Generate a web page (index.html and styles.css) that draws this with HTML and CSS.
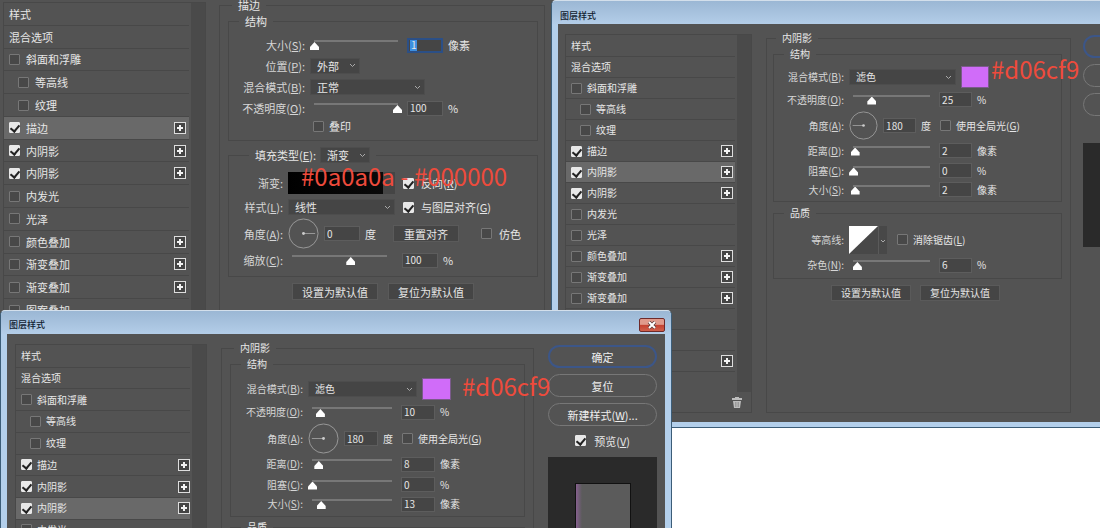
FILE: index.html
```html
<!DOCTYPE html>
<html lang="zh-CN">
<head>
<meta charset="utf-8">
<title>图层样式</title>
<link rel="stylesheet" href="styles.css">
</head>
<body>
<main class="desktop">

<section class="window stroke-window" aria-label="描边">
  <div class="body">
    <div class="effects">
      <div class="effects-main">
        <ul class="list">
          <li>样式</li>
          <li>混合选项</li>
          <li><label><input type="checkbox">斜面和浮雕</label></li>
          <li class="sub"><label><input type="checkbox">等高线</label></li>
          <li class="sub"><label><input type="checkbox">纹理</label></li>
          <li class="selected"><label><input type="checkbox" checked>描边</label><button class="add" aria-label="添加"></button></li>
          <li><label><input type="checkbox" checked>内阴影</label><button class="add" aria-label="添加"></button></li>
          <li><label><input type="checkbox" checked>内阴影</label><button class="add" aria-label="添加"></button></li>
          <li><label><input type="checkbox">内发光</label></li>
          <li><label><input type="checkbox">光泽</label></li>
          <li><label><input type="checkbox">颜色叠加</label><button class="add" aria-label="添加"></button></li>
          <li><label><input type="checkbox">渐变叠加</label><button class="add" aria-label="添加"></button></li>
          <li><label><input type="checkbox">渐变叠加</label><button class="add" aria-label="添加"></button></li>
          <li><label><input type="checkbox">图案叠加</label></li>
        </ul>
        <div class="scroll"></div>
      </div>
    </div>
    <fieldset class="panel">
      <legend>描边</legend>
      <fieldset class="group stroke-shape">
        <legend>结构</legend>
        <div class="row"><label class="name" for="a-size">大小(<u>S</u>):</label><input class="slider" type="range" value="0" aria-label="大小"><input class="num focused" id="a-size" value="1"><span>像素</span></div>
        <div class="row"><label class="name" for="a-pos">位置(<u>P</u>):</label><select class="short" id="a-pos"><option>外部</option></select></div>
        <div class="row"><label class="name" for="a-mode">混合模式(<u>B</u>):</label><select class="wide" id="a-mode"><option>正常</option></select></div>
        <div class="row"><label class="name" for="a-op">不透明度(<u>O</u>):</label><input class="slider" type="range" value="100" aria-label="不透明度"><input class="num" id="a-op" value="100"><span>%</span></div>
        <div class="row"><span class="name"></span><label class="check overprint"><input type="checkbox"><span>叠印</span></label></div>
      </fieldset>
      <fieldset class="group stroke-fill">
        <legend><label for="a-fill">填充类型(<u>E</u>):</label><select class="short" id="a-fill"><option>渐变</option></select></legend>
        <div class="row"><span class="name">渐变:</span><button class="gradient" aria-label="渐变"><span></span></button><label class="check"><input type="checkbox" checked><span>反向(<u>R</u>)</span></label></div>
        <div class="row"><label class="name" for="a-style">样式(<u>L</u>):</label><select class="wide" id="a-style"><option>线性</option></select><label class="check"><input type="checkbox" checked><span>与图层对齐(<u>G</u>)</span></label></div>
        <div class="row"><label class="name" for="a-angle">角度(<u>A</u>):</label><svg class="dial" viewBox="0 0 32 32"><circle cx="16" cy="16" r="15"/><path d="M16 16H28"/><circle class="hub" cx="16" cy="16" r="1.5"/></svg><input class="num" id="a-angle" value="0"><span class="degree">度</span><button class="flat">重置对齐</button><label class="check dither"><input type="checkbox"><span>仿色</span></label></div>
        <div class="row"><label class="name" for="a-scale">缩放(<u>C</u>):</label><input class="slider" type="range" value="62" aria-label="缩放"><input class="num" id="a-scale" value="100"><span>%</span></div>
      </fieldset>
      <div class="defaults"><button class="flat">设置为默认值</button><button class="flat">复位为默认值</button></div>
    </fieldset>
  </div>
</section>

<section class="window framed back-window">
  <header class="title"><h2>图层样式</h2></header>
  <div class="body">
    <div class="effects">
      <div class="effects-main">
        <ul class="list">
          <li>样式</li>
          <li>混合选项</li>
          <li><label><input type="checkbox">斜面和浮雕</label></li>
          <li class="sub"><label><input type="checkbox">等高线</label></li>
          <li class="sub"><label><input type="checkbox">纹理</label></li>
          <li><label><input type="checkbox" checked>描边</label><button class="add" aria-label="添加"></button></li>
          <li class="selected"><label><input type="checkbox" checked>内阴影</label><button class="add" aria-label="添加"></button></li>
          <li><label><input type="checkbox" checked>内阴影</label><button class="add" aria-label="添加"></button></li>
          <li><label><input type="checkbox">内发光</label></li>
          <li><label><input type="checkbox">光泽</label></li>
          <li><label><input type="checkbox">颜色叠加</label><button class="add" aria-label="添加"></button></li>
          <li><label><input type="checkbox">渐变叠加</label><button class="add" aria-label="添加"></button></li>
          <li><label><input type="checkbox">渐变叠加</label><button class="add" aria-label="添加"></button></li>
          <li></li>
          <li></li>
          <li><button class="add" aria-label="添加"></button></li>
        </ul>
        <div class="scroll"></div>
      </div>
      <div class="tools"><button aria-label="删除"><svg viewBox="0 0 10 12"><path d="M3 1h4v1h3v2H0V2h3zM1 5h8l-1 7H2z"/><path class="slit" d="M3.500 6v5M5 6v5M6.500 6v5"/></svg></button></div>
    </div>
    <fieldset class="panel">
      <legend>内阴影</legend>
      <fieldset class="group shadow-shape">
        <legend>结构</legend>
        <div class="row"><label class="name" for="b-mode">混合模式(<u>B</u>):</label><select class="wide" id="b-mode"><option>滤色</option></select><button class="swatch" aria-label="颜色"></button></div>
        <div class="row"><label class="name" for="b-op">不透明度(<u>O</u>):</label><input class="slider" type="range" value="24" aria-label="不透明度"><input class="num" id="b-op" value="25"><span>%</span></div>
        <div class="row"><label class="name" for="b-angle">角度(<u>A</u>):</label><svg class="dial" viewBox="0 0 32 32"><circle cx="16" cy="16" r="15"/><path d="M16 16H4"/><circle class="hub" cx="16" cy="16" r="1.5"/></svg><input class="num" id="b-angle" value="180"><span class="degree">度</span><label class="check"><input type="checkbox"><span>使用全局光(<u>G</u>)</span></label></div>
        <div class="row"><label class="name" for="b-dist">距离(<u>D</u>):</label><input class="slider" type="range" value="2" aria-label="距离"><input class="num" id="b-dist" value="2"><span>像素</span></div>
        <div class="row"><label class="name" for="b-choke">阻塞(<u>C</u>):</label><input class="slider" type="range" value="0" aria-label="阻塞"><input class="num" id="b-choke" value="0"><span>%</span></div>
        <div class="row"><label class="name" for="b-size">大小(<u>S</u>):</label><input class="slider" type="range" value="2" aria-label="大小"><input class="num" id="b-size" value="2"><span>像素</span></div>
      </fieldset>
      <fieldset class="group quality">
        <legend>品质</legend>
        <div class="row"><span class="name">等高线:</span><button class="contour" aria-label="等高线"><svg viewBox="0 0 38 28"><path class="curve" d="M0 0H29L0 28z"/><path class="split" d="M29.500 0v28"/><path class="arrow" d="M32 14l2 2 2-2"/></svg></button><label class="check"><input type="checkbox"><span>消除锯齿(<u>L</u>)</span></label></div>
        <div class="row"><label class="name" for="b-noise">杂色(<u>N</u>):</label><input class="slider" type="range" value="5" aria-label="杂色"><input class="num" id="b-noise" value="6"><span>%</span></div>
      </fieldset>
      <div class="defaults"><button class="flat">设置为默认值</button><button class="flat">复位为默认值</button></div>
    </fieldset>
    <div class="actions">
      <button class="pill primary" aria-label="确定"></button>
      <button class="pill" aria-label="复位"></button>
      <button class="pill" aria-label="新建样式"></button>
      <div class="preview"></div>
    </div>
  </div>
</section>

<section class="window framed front-window">
  <header class="title"><h2>图层样式</h2><button class="close" aria-label="关闭"><svg viewBox="0 0 10 8"><path class="edge" d="M2 1l6 6M8 1L2 7"/><path d="M2 1l6 6M8 1L2 7"/></svg></button></header>
  <div class="body">
    <div class="effects">
      <div class="effects-main">
        <ul class="list">
          <li>样式</li>
          <li>混合选项</li>
          <li><label><input type="checkbox">斜面和浮雕</label></li>
          <li class="sub"><label><input type="checkbox">等高线</label></li>
          <li class="sub"><label><input type="checkbox">纹理</label></li>
          <li><label><input type="checkbox" checked>描边</label><button class="add" aria-label="添加"></button></li>
          <li><label><input type="checkbox" checked>内阴影</label><button class="add" aria-label="添加"></button></li>
          <li class="selected"><label><input type="checkbox" checked>内阴影</label><button class="add" aria-label="添加"></button></li>
          <li><label><input type="checkbox">内发光</label></li>
          <li><label><input type="checkbox">光泽</label></li>
        </ul>
        <div class="scroll"></div>
      </div>
    </div>
    <fieldset class="panel">
      <legend>内阴影</legend>
      <fieldset class="group shadow-shape">
        <legend>结构</legend>
        <div class="row"><label class="name" for="c-mode">混合模式(<u>B</u>):</label><select class="wide" id="c-mode"><option>滤色</option></select><button class="swatch" aria-label="颜色"></button></div>
        <div class="row"><label class="name" for="c-op">不透明度(<u>O</u>):</label><input class="slider" type="range" value="10" aria-label="不透明度"><input class="num" id="c-op" value="10"><span>%</span></div>
        <div class="row"><label class="name" for="c-angle">角度(<u>A</u>):</label><svg class="dial" viewBox="0 0 32 32"><circle cx="16" cy="16" r="15"/><path d="M16 16H4"/><circle class="hub" cx="16" cy="16" r="1.5"/></svg><input class="num" id="c-angle" value="180"><span class="degree">度</span><label class="check"><input type="checkbox"><span>使用全局光(<u>G</u>)</span></label></div>
        <div class="row"><label class="name" for="c-dist">距离(<u>D</u>):</label><input class="slider" type="range" value="8" aria-label="距离"><input class="num" id="c-dist" value="8"><span>像素</span></div>
        <div class="row"><label class="name" for="c-choke">阻塞(<u>C</u>):</label><input class="slider" type="range" value="0" aria-label="阻塞"><input class="num" id="c-choke" value="0"><span>%</span></div>
        <div class="row"><label class="name" for="c-size">大小(<u>S</u>):</label><input class="slider" type="range" value="11" aria-label="大小"><input class="num" id="c-size" value="13"><span>像素</span></div>
      </fieldset>
      <fieldset class="group quality">
        <legend>品质</legend>
      </fieldset>
    </fieldset>
    <div class="actions">
      <button class="pill primary">确定</button>
      <button class="pill">复位</button>
      <button class="pill">新建样式(<u>W</u>)...</button>
      <label class="check"><input type="checkbox" checked><span>预览(<u>V</u>)</span></label>
      <div class="preview"><div class="sample"></div></div>
    </div>
  </div>
</section>

<p class="note note-gradient">#0a0a0a - #000000</p>
<p class="note note-back">#d06cf9</p>
<p class="note note-front">#d06cf9</p>
</main>
</body>
</html>
```

FILE: styles.css
```css
* { box-sizing: border-box; }

body {
  margin: 0;
  background: #fff;
  color: #e6e6e6;
  font: 10px/16px "Noto Sans CJK SC", "Liberation Sans", sans-serif;
}

button, input, select {
  margin: 0;
  padding: 0;
  border: 0;
  border-radius: 0;
  background: none;
  color: inherit;
  font: inherit;
}

u { text-underline-offset: 1px; }

.desktop {
  position: relative;
  height: 100vh;
  overflow: hidden;
}

/* Windows */
.window {
  position: absolute;
  background: #535353;
}

.stroke-window {
  top: -3px;
  left: 0;
  width: 51%;
  min-height: 340px;
  font-size: 11px;
  --name: 76px;
  --slider: 92px;
  --num: 36px;
  --wide: 115px;
  --dial: 31px;
}

.back-window {
  top: 0;
  left: 50.1%;
  width: 59.6%;
  --name: 70px;
  --slider: 85px;
  --num: 33px;
  --wide: 107px;
  --dial: 29px;
}

.front-window {
  top: 310px;
  left: 0;
  width: 61.1%;
  --name: 72px;
  --slider: 88px;
  --num: 34px;
  --wide: 109px;
  --dial: 31px;
}

.framed {
  padding: 0 6px 5px;
  border: 1px solid #3c5d78;
  border-top-color: #d3dfeb;
  border-radius: 5px 5px 0 0;
  background: #b3cfeb;
}

.title {
  display: flex;
  align-items: center;
  justify-content: space-between;
  height: 23px;
  margin: 0 -6px;
  padding: 4px 6px 0 8px;
  border-radius: 4px 4px 0 0;
  background: linear-gradient(#9bb7d4, #b3cde8);
}

.back-window .title { padding-top: 7px; }

.title h2 {
  margin: 0;
  color: #10202f;
  font-size: 9px;
  font-weight: 500;
}

.close {
  display: grid;
  place-items: center;
  width: 26px;
  height: 14px;
  border: 1px solid #6e2a2a;
  border-radius: 2px;
  background: linear-gradient(#e09a8c 45%, #c4402f 50%, #d0604c);
}

.close svg { width: 10px; height: 8px; fill: none; stroke: #fff; stroke-width: 2; }
.close .edge { stroke: #5a3a3a; stroke-width: 3.500; }

.body {
  display: flex;
  background: #535353;
}

.framed .body {
  gap: 14px;
  padding: 6px 8px 9px;
}

.back-window .body { padding-left: 7px; }

.stroke-window .body {
  gap: 13px;
  padding: 0 16px 0 3px;
}

/* Effects list */
.effects {
  display: flex;
  flex: none;
  flex-direction: column;
  width: 187px;
  margin-top: 4px;
  border: 1px solid #484848;
}

.front-window .effects { width: 192px; }
.stroke-window .effects { width: 203px; margin-top: 5px; }

.effects-main {
  display: flex;
  flex: 1;
}

.scroll { width: 14px; background: #4a4a4a; }

.list {
  display: flex;
  flex: 1;
  flex-direction: column;
  height: 336px;
  margin: 0;
  padding: 0;
  list-style: none;
}

.back-window .effects-main { min-height: 357px; }
.framed .list { margin-top: 1px; }
.front-window .list { height: 217px; }
.stroke-window .list { height: 319px; }

.list li {
  display: flex;
  flex: 1;
  align-items: center;
  justify-content: space-between;
  margin-right: 2px;
  padding: 0 2px 0 5px;
  border-bottom: 1px solid #484848;
}

.front-window .list li { padding-right: 0; }
.stroke-window .list li { padding-right: 3px; }
.list .sub, .stroke-window .list .sub { padding-left: 14px; }
.list .selected { background: #696969; }

.list label, .check {
  display: flex;
  align-items: center;
  gap: 5px;
  white-space: nowrap;
}

.stroke-window .list label { gap: 6px; }

input[type="checkbox"] {
  display: grid;
  flex: none;
  place-items: center;
  width: 11px;
  height: 11px;
  border: 1px solid #777;
  border-radius: 1px;
  background: #484848;
  appearance: none;
}

input[type="checkbox"]:checked {
  border-color: #e8e8e8;
  background: #e8e8e8;
}

input[type="checkbox"]:checked::before {
  width: 4px;
  height: 7px;
  margin-bottom: 2px;
  border: solid #222;
  border-width: 0 2px 2px 0;
  content: "";
  transform: rotate(40deg);
}

.add {
  width: 12px;
  height: 12px;
  margin-left: auto;
  border: 1px solid #ddd;
  background:
    linear-gradient(#f2f2f2, #f2f2f2) center / 6px 2px no-repeat,
    linear-gradient(#f2f2f2, #f2f2f2) center / 2px 6px no-repeat,
    #444;
}

.tools {
  display: flex;
  justify-content: flex-end;
  height: 20px;
  padding: 4px 9px;
}

.tools button { display: flex; }
.tools svg { width: 10px; height: 12px; fill: #bdbdbd; }
.tools .slit { stroke: #777; stroke-width: 0.500; }

/* Settings */
fieldset {
  min-width: 0;
  margin: 0;
  padding: 0;
  border: 1px solid #484848;
}

legend {
  margin-left: 10px;
  padding: 0 6px;
}

.panel {
  flex: 1;
  padding: 0 8px 0 6px;
}

.panel > legend { margin-left: 3px; }
.front-window .panel { padding-left: 8px; }
.front-window .panel > legend, .stroke-window .panel > legend { margin-left: 4px; }
.stroke-window .panel { padding: 0 6px 0 8px; }

.group {
  display: grid;
  align-content: start;
}

.stroke-shape {
  grid-template-rows: 20px 21px 22px 20px 16px;
  padding: 6px 0;
}

.overprint { margin-left: 3px; }

.stroke-fill {
  --name: 54px;
  grid-template-rows: 24px 24px 29px 24px;
  margin-top: 4px;
  padding: 6px 0 4px;
}

.stroke-fill legend {
  display: flex;
  align-items: center;
  gap: 4px;
  height: 20px;
  margin-left: 20px;
}

.shadow-shape {
  grid-template-rows: 22px 23px 29px 21px 19px 19px;
  padding: 4px 0 2px;
}

.front-window .shadow-shape {
  grid-template-rows: 22px 24px 29px 22px 19px 20px;
  padding-top: 6px;
}

.quality {
  grid-template-rows: 31px 20px;
  margin-top: 3px;
  padding: 3px 0;
}

.front-window .quality { margin-top: 2px; }

.row {
  display: flex;
  align-items: center;
  gap: 5px;
  white-space: nowrap;
}

.name {
  flex: none;
  width: var(--name);
  color: #d6d6d6;
  text-align: right;
}

.slider {
  width: var(--slider);
  height: 12px;
  appearance: none;
}

.slider::-webkit-slider-runnable-track {
  height: 12px;
  background: linear-gradient(#777, #777) center 1px / calc(100% - 8px) 2px no-repeat;
}

.slider::-webkit-slider-thumb {
  width: 9px;
  height: 8px;
  margin-top: 3px;
  background: #fff;
  clip-path: polygon(50% 0, 100% 62%, 100% 100%, 0 100%, 0 62%);
  appearance: none;
}

.stroke-fill .slider { width: 103px; margin-right: 6px; }

.num {
  width: var(--num);
  height: 15px;
  padding: 0 2px;
  border: 1px solid #5d5d5d;
  background: #454545;
  font-size: 10px;
}

.focused {
  border: 2px solid #2b4f86;
  background: linear-gradient(#3d8fe0, #3d8fe0) 1px center / 7px 11px no-repeat #454545;
}

select {
  height: 16px;
  padding-left: 6px;
  border: 1px solid #4d4d4d;
  background: #454545 url("data:image/svg+xml,%3Csvg xmlns='http://www.w3.org/2000/svg' width='7' height='5'%3E%3Cpath d='M1 1l2.500 2.500L6 1' fill='none' stroke='%23aaa'/%3E%3C/svg%3E") right 3px center no-repeat;
  line-height: 14px;
  appearance: none;
}

.short { width: 50px; }
.wide { width: var(--wide); }
.stroke-fill .wide { width: 107px; }

.dial {
  flex: none;
  width: var(--dial);
  height: var(--dial);
  fill: none;
  stroke: #9a9a9a;
}

.dial .hub { fill: #ccc; stroke: none; }
.degree { width: 14px; }

.swatch {
  width: 29px;
  height: 22px;
  border: 1px solid #7a5a8a;
  background: #d06cf9;
}

.back-window .swatch { width: 28px; }

.gradient {
  display: flex;
  width: 107px;
  height: 22px;
  background: #454545;
}

.gradient span {
  width: 95px;
  height: 22px;
  background: linear-gradient(90deg, #000, #0a0a0a);
}

.flat {
  height: 17px;
  border: 1px solid #5a5a5a;
  background: #454545;
  text-align: center;
  line-height: 14px;
}

.stroke-fill .flat { width: 66px; margin-left: 9px; }
.dither { margin-left: 17px; }
.stroke-fill .check { gap: 7px; }
.stroke-fill .row:nth-of-type(-n+2) .check { margin-left: 3px; }

.contour {
  display: flex;
  margin-right: 5px;
  background: #484848;
}

.contour svg { width: 38px; height: 28px; fill: none; }
.contour .curve { fill: #fff; }
.contour .split { stroke: #5a5a5a; }
.contour .arrow { stroke: #aaa; }

.defaults {
  display: flex;
  gap: 9px;
  justify-content: center;
  margin: 6px 4px 0 0;
}

.defaults .flat { width: 80px; height: 16px; }
.stroke-window .defaults { gap: 10px; margin: 6px 0 0; }
.stroke-window .defaults .flat { width: 86px; height: 17px; }

/* Action column */
.actions {
  display: flex;
  flex: none;
  flex-direction: column;
  align-items: stretch;
  gap: 6px;
  width: 109px;
  padding-top: 5px;
  font-size: 11px;
}

.back-window .actions { margin-left: -2px; }

.pill {
  height: 23px;
  border: 1px solid #777;
  border-radius: 12px;
  color: #eee;
}

.primary { border: 2px solid #3c5688; }

.actions .check {
  justify-content: center;
  gap: 8px;
  height: 17px;
}

.preview {
  display: flex;
  flex: 1;
  justify-content: center;
  margin-top: 2px;
  padding-top: 26px;
  background: #2a2a2a;
}

.back-window .preview { flex: none; height: 104px; margin-top: 21px; }

.sample {
  width: 56px;
  border: 1px solid #111;
  background: linear-gradient(90deg, #86608f, #5b5b5b 6px);
}

/* Annotations over the windows */
.note {
  position: absolute;
  margin: 0;
  color: #ee4b3c;
  font-size: 24px;
  line-height: 28px;
  white-space: nowrap;
}

.note-gradient { top: 162px; left: 301px; }
.note-back { top: 55px; left: 991px; }
.note-front { top: 372px; left: 462px; }
```
